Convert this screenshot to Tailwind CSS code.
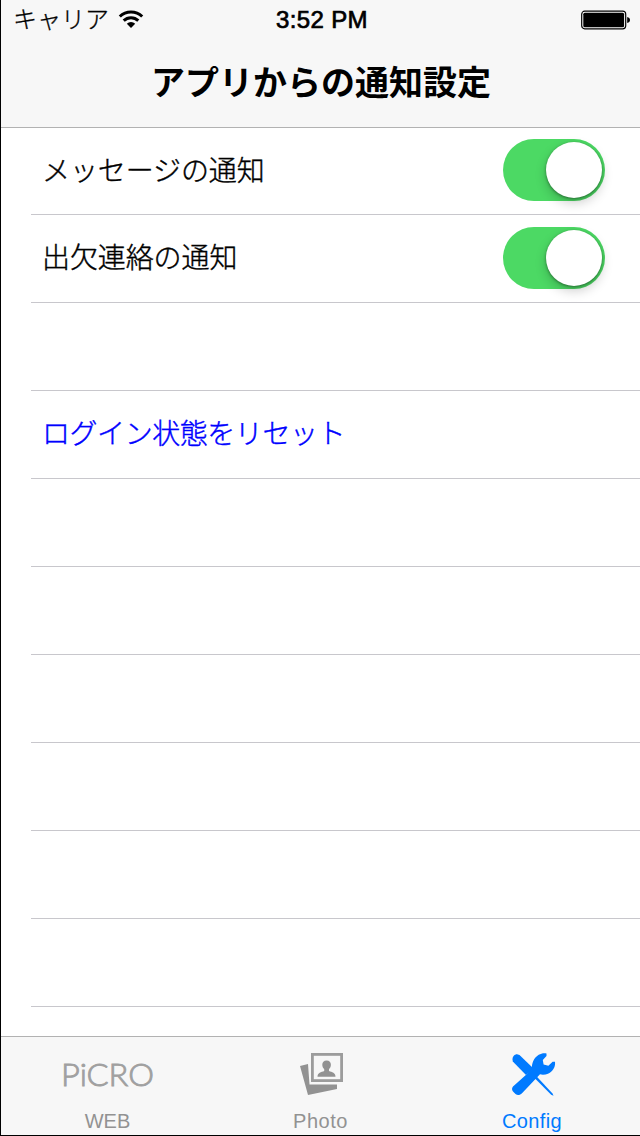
<!DOCTYPE html>
<html lang="ja">

<head>
    <meta charset="UTF-8">
    <meta name="viewport" content="width=device-width, initial-scale=1.0">
    <title>アプリからの通知設定</title>
    <script src="https://cdn.jsdelivr.net/npm/@tailwindcss/browser@4"></script>
</head>

<body class="bg-white font-['Liberation_Sans','Noto_Sans_CJK_JP',sans-serif] text-black">
    <div class="w-[640px] h-[1136px] flex flex-col overflow-hidden border-l border-b border-black">
        <header class="h-32 shrink-0 bg-[#f7f7f7] border-b border-[#b2b2b2]">
            <!-- Status bar -->
            <div class="h-10 grid grid-cols-3 items-center pl-3 pr-[9px]">
                <div class="flex items-center">
                    <span class="text-2xl leading-10 font-light -mt-px [-webkit-text-stroke:0.3px_black]">キャリア</span>
                    <svg class="w-[26px] h-[20px] ml-[9px] -mt-[3px]" viewBox="0 0 26 20">
                        <g fill="none" stroke="#000" stroke-width="3">
                            <path d="M1.800 7.500a16 16 0 0 1 22.400 0" />
                            <path d="M5.700 11.600a10.500 10.500 0 0 1 14.600 0" />
                        </g>
                        <path d="M13 19l-4.200-4.200a6 6 0 0 1 8.400 0z" />
                    </svg>
                </div>
                <div class="text-center text-2xl leading-10 font-medium tracking-[0.35px] [-webkit-text-stroke:0.7px_black]">3:52 PM</div>
                <svg class="w-[50px] h-[20px] justify-self-end -mt-px" viewBox="0 0 50 20">
                    <rect x="0.7" y="1.2" width="44" height="17.6" rx="3" fill="#fff" stroke="#000" stroke-width="1.2" />
                    <rect x="2.3" y="2.8" width="40.8" height="14.4" rx="1.5" />
                    <path d="M46.2 7c1.7.3 2.8 1.5 2.8 3s-1.100 2.700-2.800 3z" />
                </svg>
            </div>
            <h1 class="h-[87px] text-center text-[34px] leading-[86px] font-bold pl-px">アプリからの通知設定</h1>
        </header>

        <main class="flex-1 min-h-0 overflow-hidden pl-[30px]">
            <div class="h-[87px] flex items-center justify-between border-b border-[#c8c7cc] pl-[11px] pr-[35px]">
                <span class="text-[28px] leading-10 font-light tracking-[-0.1px] mt-px [-webkit-text-stroke:0.4px_black]">メッセージの通知</span>
                <div class="w-[102px] h-[62px] rounded-full bg-[#4cd964] p-[3px] flex justify-end -mt-0.5">
                    <div class="size-14 rounded-full bg-white shadow-[0_5px_12px_rgba(0,0,0,0.2),0_1px_3px_rgba(0,0,0,0.4)]"></div>
                </div>
            </div>
            <div class="h-[88px] flex items-center justify-between border-b border-[#c8c7cc] pl-[11px] pr-[35px]">
                <span class="text-[28px] leading-10 font-light tracking-[-0.1px] mt-px [-webkit-text-stroke:0.4px_black]">出欠連絡の通知</span>
                <div class="w-[102px] h-[62px] rounded-full bg-[#4cd964] p-[3px] flex justify-end -mt-0.5">
                    <div class="size-14 rounded-full bg-white shadow-[0_5px_12px_rgba(0,0,0,0.2),0_1px_3px_rgba(0,0,0,0.4)]"></div>
                </div>
            </div>
            <div class="h-[88px] border-b border-[#c8c7cc]"></div>
            <div class="h-[88px] flex items-center border-b border-[#c8c7cc] pl-[11px]">
                <span class="text-[28px] leading-10 font-light tracking-[-0.45px] mt-px text-[#0000ff] [-webkit-text-stroke:0.4px_#0000ff]">ログイン状態をリセット</span>
            </div>
            <div class="h-[88px] border-b border-[#c8c7cc]"></div>
            <div class="h-[88px] border-b border-[#c8c7cc]"></div>
            <div class="h-[88px] border-b border-[#c8c7cc]"></div>
            <div class="h-[88px] border-b border-[#c8c7cc]"></div>
            <div class="h-[88px] border-b border-[#c8c7cc]"></div>
            <div class="h-[88px] border-b border-[#c8c7cc]"></div>
        </main>

        <!-- Tab bar -->
        <nav class="h-[99px] shrink-0 grid grid-cols-3 bg-[#f7f7f7] border-t border-[#b2b2b2] text-xl leading-6 text-[#929292]">
            <div class="flex flex-col items-center pt-3.5">
                <svg class="w-[94px] h-12" viewBox="0 0 94 48">
                    <text x="0" y="35" textLength="93" lengthAdjust="spacingAndGlyphs" font-family="Lato" font-weight="300" font-size="32" fill="#a0a0a0" stroke="#a0a0a0" stroke-width="0.9">PiCRO</text>
                </svg>
                <span class="mt-2.5">WEB</span>
            </div>
            <div class="flex flex-col items-center pt-3.5">
                <svg class="w-12 h-12" viewBox="0 0 48 48">
                    <path d="M3 15l8-2 1.500 20.500H40V38l-29 6z" fill="#929292" />
                    <rect x="15.400" y="3.400" width="29.200" height="26.200" fill="#f7f7f7" stroke="#9c9c9c" stroke-width="2.800" />
                    <path d="M29.600 9.500c2.800 0 4.300 1.800 4.300 4.300 0 1.900-.7 3.400-1.900 4.200v2c3 1.200 6.500 1.800 6.500 5.800H20.500c0-4 3.700-4.600 6.700-5.800v-2c-1.200-.8-1.900-2.300-1.900-4.200 0-2.500 1.500-4.300 4.300-4.300z" fill="#929292" />
                </svg>
                <span class="mt-2.5 tracking-[0.5px]">Photo</span>
            </div>
            <div class="flex flex-col items-center pt-3.5 pr-[3px] text-[#007aff]">
                <svg class="w-12 h-12 ml-[3px]" viewBox="0 0 48 48" fill="currentColor">
                    <path d="M2.500 8.500C2.500 5.500 4.500 3.300 7 3.300L9.500 4 24 18l-8 6L2.800 10.500z" />
                    <path d="M24 26.500l2-1.800 16.500 17.800 1 2.300-2.300-1z" />
                    <path d="M22 18.500c-.5-3 .3-7.500 2.300-10.500 2.700-4 7.500-6.500 12.200-5.500v2.500l-3.700 4 .8 4.500 4.800 1.200 4.200-4h2.400c.7 6-3 10.300-7 12-2.500 1-5.500 1.300-8 .6L12 42.300c-2 2-4.500 2.500-6.500.7l-2.500-2.500c-1.300-1.500-1.300-3.500 0-5z" />
                </svg>
                <span class="mt-2.5 tracking-[0.4px]">Config</span>
            </div>
        </nav>
    </div>
</body>

</html>
